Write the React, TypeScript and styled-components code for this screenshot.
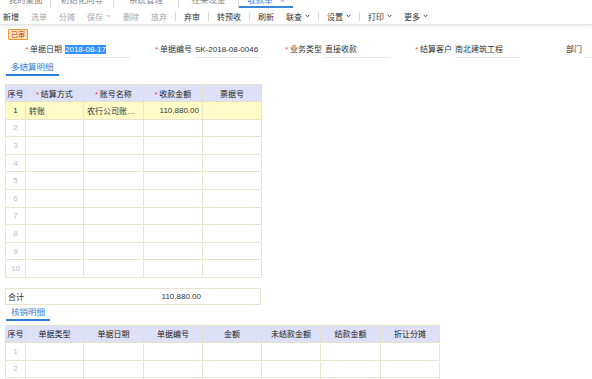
import React from 'react';
import styled, { createGlobalStyle } from 'styled-components';

const Global = createGlobalStyle`
  html, body { margin: 0; padding: 0; overflow: hidden; background: #fff; }
  body {
    font-family: "Liberation Sans", "Noto Sans CJK SC", sans-serif;
    font-size: 8px;
    color: #333;
  }
  * { box-sizing: border-box; }
`;

const Page = styled.div`
  width: 592px;
  height: 379px;
  overflow: hidden;
`;

const TabBar = styled.div`
  display: flex;
  align-items: flex-end;
  height: 8px;
  overflow: hidden;
  padding-left: 1px;
`;

const Tab = styled.div<{ $w: number; $active?: boolean; $sep?: boolean }>`
  flex: 0 0 ${p => p.$w}px;
  height: 16px;
  line-height: 16px;
  text-align: center;
  font-size: 8.5px;
  white-space: nowrap;
  color: ${p => (p.$active ? '#3a86d8' : '#888')};
  border-left: ${p => (p.$sep ? '1px solid #dcdcdc' : 'none')};
  box-shadow: ${p => (p.$active ? 'inset 0 -2px 0 #3a86d8' : 'none')};
`;

const Close = styled.span`
  margin-left: 7px;
  color: #999;
`;

const Toolbar = styled.div`
  display: flex;
  align-items: center;
  gap: 6px;
  height: 17px;
  border-bottom: 1px solid #e6e6e6;
  box-shadow: 0 2px 3px rgba(0, 0, 0, 0.07);
`;

const ToolButton = styled.span<{ $disabled?: boolean }>`
  display: inline-flex;
  align-items: center;
  gap: 3px;
  padding: 0 3px;
  white-space: nowrap;
  color: ${p => (p.$disabled ? '#a8a8a8' : '#333')};
`;

const ToolSep = styled.span`
  width: 1px;
  height: 9px;
  margin: 0 -1px;
  background: #d9d9d9;
`;

const Badge = styled.div`
  margin: 4px 0 0 8px;
  width: 20px;
  height: 11px;
  line-height: 9px;
  text-align: center;
  font-size: 7px;
  color: #c0392b;
  background: #fde2b2;
  border: 1px solid #e6993a;
  border-radius: 1px;
`;

const FormRow = styled.div`
  display: flex;
  margin-top: 3px;
  height: 15px;
  overflow: hidden;
`;

const Field = styled.div`
  flex: 0 0 130px;
  display: flex;
`;

const Label = styled.div`
  flex: 0 0 62px;
  margin-right: 3px;
  text-align: right;
  line-height: 14px;
  white-space: nowrap;
  color: #333;
`;

const Star = styled.span`
  color: #f04134;
  font-size: 7px;
  margin-right: 2px;
`;

const Input = styled.div`
  flex: 0 0 65px;
  line-height: 14px;
  border-bottom: 1px solid #e8e8e8;
  white-space: nowrap;
  overflow: hidden;
`;

const Selected = styled.span`
  background: #3390ff;
  color: #fff;
`;

const SectionTabs = styled.div<{ $mt: number }>`
  display: flex;
  margin-top: ${p => p.$mt}px;
  padding-left: 6px;
`;

const SubTab = styled.div`
  padding: 0 5px;
  line-height: 14px;
  font-size: 8.5px;
  color: #2d7fd6;
  border-bottom: 2px solid #2d7fd6;
`;

const Grid = styled.table<{ $w: number; $mt: number }>`
  margin: ${p => p.$mt}px 0 0 5px;
  width: ${p => p.$w}px;
  border-collapse: collapse;
  table-layout: fixed;
`;

const Th = styled.th`
  height: 17px;
  padding: 0;
  background: #dde0f6;
  border: 1px solid #e3e1cc;
  font-weight: normal;
  color: #222;
  text-align: center;
  white-space: nowrap;
`;

const Tr = styled.tr<{ $hl?: boolean }>`
  background: ${p => (p.$hl ? '#fffbc6' : '#fff')};
`;

const Td = styled.td<{ $align?: 'left' | 'right' | 'center' }>`
  height: 17.6px;
  padding: 0 3px;
  border: 1px solid #e7e5cd;
  text-align: ${p => p.$align || 'left'};
  white-space: nowrap;
  overflow: hidden;
  text-overflow: ellipsis;
  color: #333;
`;

const NumCell = styled(Td)<{ $dim?: boolean }>`
  padding: 0;
  text-align: center;
  color: ${p => (p.$dim ? '#b6bade' : '#333')};
`;

const TotalBar = styled.div`
  display: grid;
  grid-template-columns: 138px 59px 1fr;
  align-items: center;
  margin: 10px 0 0 5px;
  width: 256px;
  height: 17px;
  border: 1px solid #e7e5cd;
`;

const TotalLabel = styled.span`
  padding-left: 2px;
`;

const TotalAmount = styled.span`
  text-align: right;
  padding-right: 2px;
`;

const Chevron = () => (
  <svg width="5" height="4" viewBox="0 0 5 4" fill="none">
    <path d="M0.6 0.8 L2.5 2.8 L4.4 0.8" stroke="currentColor" strokeWidth="0.9" />
  </svg>
);

const tabs = [
  { t: '我的桌面', w: 49 },
  { t: '初始化向导', w: 63 },
  { t: '系统管理', w: 65 },
  { t: '往来现金', w: 60 },
];

type Tool = { t: string; d?: boolean; c?: boolean } | 'sep';
const tools: Tool[] = [
  { t: '新增' },
  { t: '选单', d: true },
  { t: '分摊', d: true },
  { t: '保存', d: true, c: true },
  { t: '删除', d: true },
  { t: '放弃', d: true },
  'sep',
  { t: '弃审' },
  'sep',
  { t: '转预收' },
  'sep',
  { t: '刷新' },
  { t: '联查', c: true },
  'sep',
  { t: '设置', c: true },
  'sep',
  { t: '打印', c: true },
  { t: '更多', c: true },
];

const cols1 = [20, 58, 60, 59, 59];
const cols2 = [20, 58, 60, 59, 59, 59, 60, 59];

export default function App() {
  return (
    <Page>
      <Global />
      <TabBar>
        {tabs.map((x, i) => (
          <Tab key={x.t} $w={x.w} $sep={i > 0}>
            {x.t}
          </Tab>
        ))}
        <Tab $w={55} $active $sep>
          收款单<Close>×</Close>
        </Tab>
      </TabBar>

      <Toolbar>
        {tools.map((x, i) =>
          x === 'sep' ? (
            <ToolSep key={i} />
          ) : (
            <ToolButton key={i} $disabled={x.d}>
              {x.t}
              {x.c && <Chevron />}
            </ToolButton>
          )
        )}
      </Toolbar>

      <Badge>已审</Badge>

      <FormRow>
        <Field>
          <Label><Star>*</Star>单据日期</Label>
          <Input><Selected>2018-08-17</Selected></Input>
        </Field>
        <Field>
          <Label><Star>*</Star>单据编号</Label>
          <Input>SK-2018-08-0046</Input>
        </Field>
        <Field>
          <Label><Star>*</Star>业务类型</Label>
          <Input>直接收款</Input>
        </Field>
        <Field>
          <Label><Star>*</Star>结算客户</Label>
          <Input>南北建筑工程</Input>
        </Field>
        <Field>
          <Label>部门</Label>
          <Input />
        </Field>
      </FormRow>

      <SectionTabs $mt={2}>
        <SubTab>多结算明细</SubTab>
      </SectionTabs>

      <Grid $w={256} $mt={8}>
        <colgroup>
          {cols1.map((w, i) => <col key={i} style={{ width: w }} />)}
        </colgroup>
        <thead>
          <tr>
            <Th>序号</Th>
            <Th><Star>*</Star>结算方式</Th>
            <Th><Star>*</Star>账号名称</Th>
            <Th><Star>*</Star>收款金额</Th>
            <Th>票据号</Th>
          </tr>
        </thead>
        <tbody>
          <Tr $hl>
            <NumCell>1</NumCell>
            <Td>转账</Td>
            <Td>农行公司账户信息</Td>
            <Td $align="right">110,880.00</Td>
            <Td />
          </Tr>
          {Array.from({ length: 9 }, (_, i) => (
            <Tr key={i}>
              <NumCell $dim>{i + 2}</NumCell>
              <Td /><Td /><Td /><Td />
            </Tr>
          ))}
        </tbody>
      </Grid>

      <TotalBar>
        <TotalLabel>合计</TotalLabel>
        <TotalAmount>110,880.00</TotalAmount>
        <span />
      </TotalBar>

      <SectionTabs $mt={0}>
        <SubTab>核销明细</SubTab>
      </SectionTabs>

      <Grid $w={434} $mt={4}>
        <colgroup>
          {cols2.map((w, i) => <col key={i} style={{ width: w }} />)}
        </colgroup>
        <thead>
          <tr>
            <Th>序号</Th>
            <Th>单据类型</Th>
            <Th>单据日期</Th>
            <Th>单据编号</Th>
            <Th>金额</Th>
            <Th>未结款金额</Th>
            <Th>结款金额</Th>
            <Th>折让分摊</Th>
          </tr>
        </thead>
        <tbody>
          {Array.from({ length: 3 }, (_, i) => (
            <Tr key={i}>
              <NumCell $dim>{i + 1}</NumCell>
              {cols2.slice(1).map((_, j) => <Td key={j} />)}
            </Tr>
          ))}
        </tbody>
      </Grid>
    </Page>
  );
}
